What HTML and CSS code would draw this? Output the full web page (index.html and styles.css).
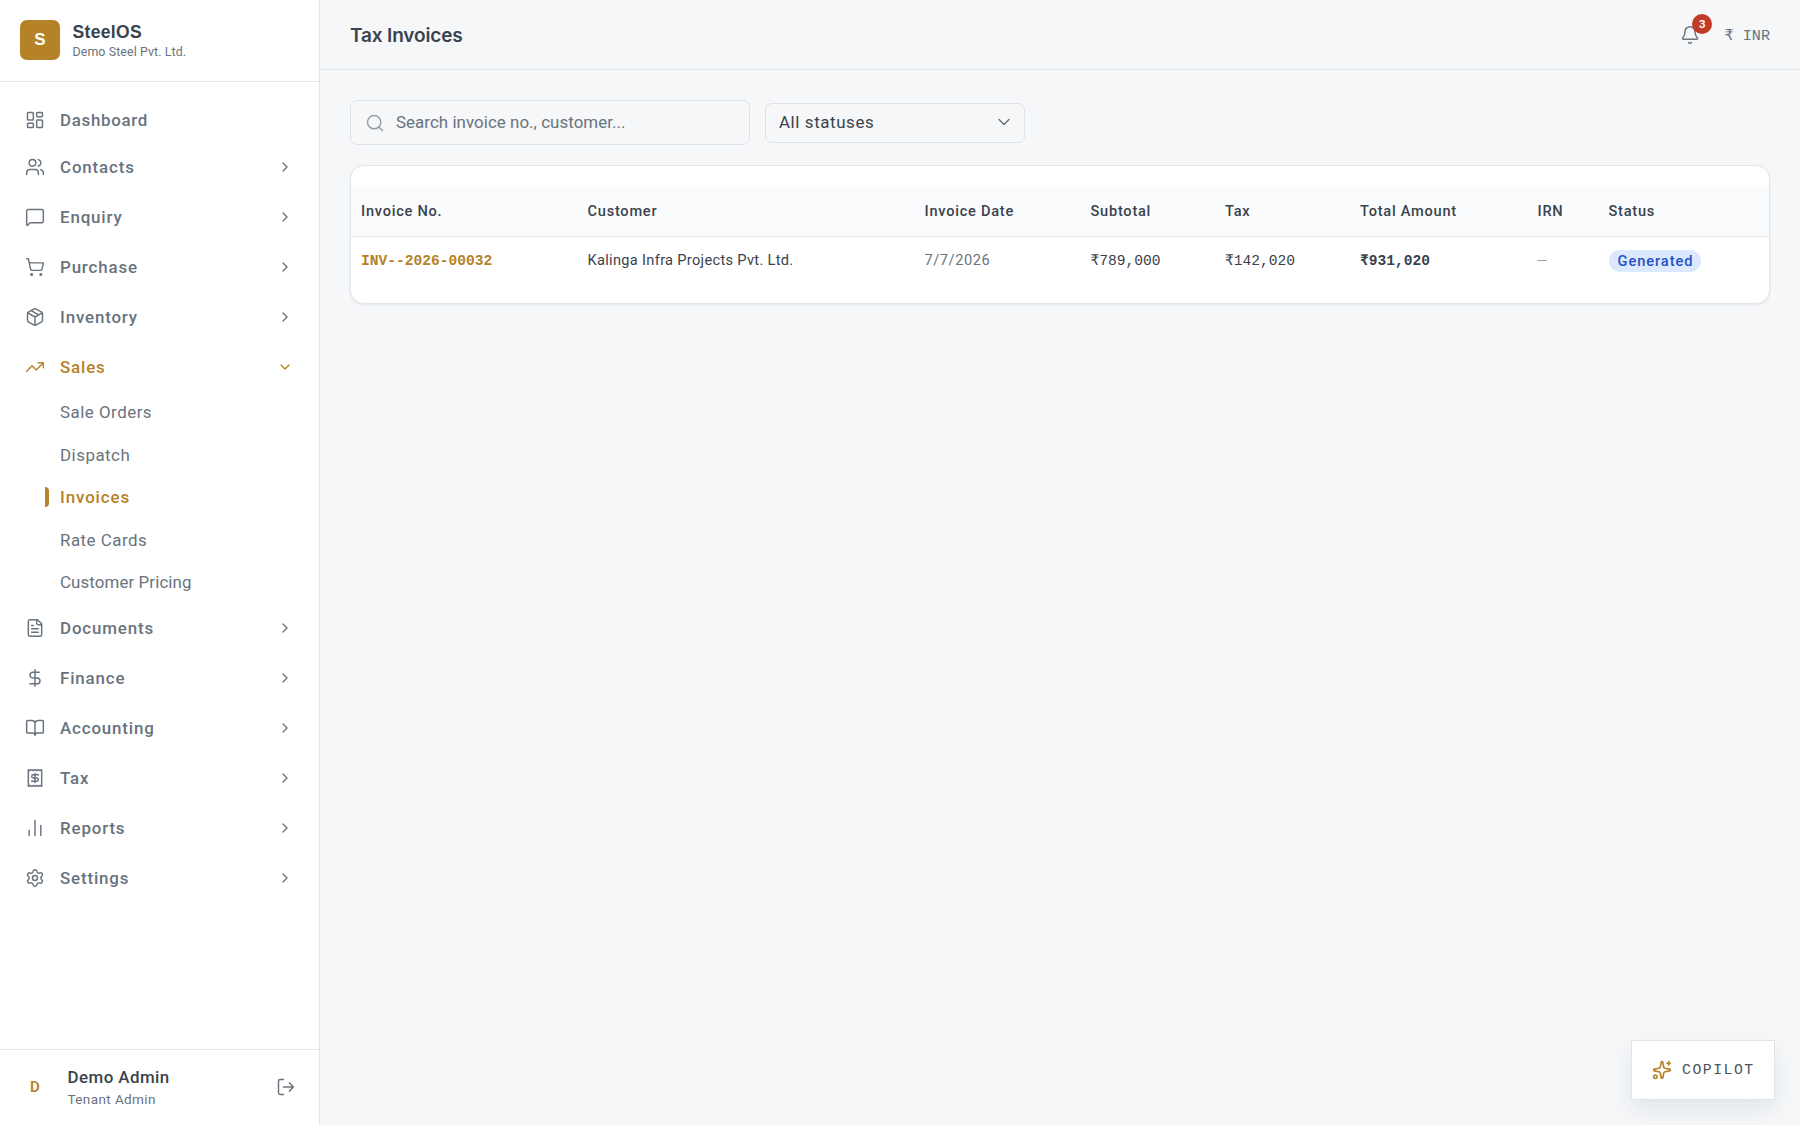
FILE: index.html
```html
<!DOCTYPE html>
<html lang="en">
<head>
  <meta charset="utf-8">
  <title>Tax Invoices - SteelOS</title>
  <link rel="stylesheet" href="styles.css">
</head>
<body>
  <aside class="sidebar">
    <div class="brand">
      <div class="brand-logo">S</div>
      <div>
        <div class="brand-name">SteelOS</div>
        <div class="brand-company">Demo Steel Pvt. Ltd.</div>
      </div>
    </div>

    <nav class="nav">
      <a class="nav-item nav-dashboard">
        <svg class="icon" viewBox="0 0 24 24"><rect x="3" y="3" width="7" height="9" rx="1"/><rect x="14" y="3" width="7" height="5" rx="1"/><rect x="14" y="12" width="7" height="9" rx="1"/><rect x="3" y="16" width="7" height="5" rx="1"/></svg>
        <span>Dashboard</span>
      </a>
      <a class="nav-item">
        <svg class="icon" viewBox="0 0 24 24"><path d="M16 21v-2a4 4 0 0 0-4-4H6a4 4 0 0 0-4 4v2"/><circle cx="9" cy="7" r="4"/><path d="M22 21v-2a4 4 0 0 0-3-3.87M16 3.13a4 4 0 0 1 0 7.75"/></svg>
        <span>Contacts</span>
        <svg class="icon chevron" viewBox="0 0 24 24"><path d="m9 18 6-6-6-6"/></svg>
      </a>
      <a class="nav-item">
        <svg class="icon" viewBox="0 0 24 24"><path d="M22 17a2 2 0 0 1-2 2H6.828a2 2 0 0 0-1.414.586l-2.202 2.202A.710.710 0 0 1 2 21.286V5a2 2 0 0 1 2-2h16a2 2 0 0 1 2 2z"/></svg>
        <span>Enquiry</span>
        <svg class="icon chevron" viewBox="0 0 24 24"><path d="m9 18 6-6-6-6"/></svg>
      </a>
      <a class="nav-item">
        <svg class="icon" viewBox="0 0 24 24"><circle cx="8" cy="21" r="1"/><circle cx="19" cy="21" r="1"/><path d="M2.05 2.05h2l2.66 12.42a2 2 0 0 0 2 1.58h9.78a2 2 0 0 0 1.95-1.57l1.65-7.43H5.12"/></svg>
        <span>Purchase</span>
        <svg class="icon chevron" viewBox="0 0 24 24"><path d="m9 18 6-6-6-6"/></svg>
      </a>
      <a class="nav-item">
        <svg class="icon" viewBox="0 0 24 24"><path d="M11 21.73a2 2 0 0 0 2 0l7-4A2 2 0 0 0 21 16V8a2 2 0 0 0-1-1.73l-7-4a2 2 0 0 0-2 0l-7 4A2 2 0 0 0 3 8v8a2 2 0 0 0 1 1.73zM12 22V12M3.29 7 12 12l8.71-5M7.5 4.27l9 5.15"/></svg>
        <span>Inventory</span>
        <svg class="icon chevron" viewBox="0 0 24 24"><path d="m9 18 6-6-6-6"/></svg>
      </a>
      <a class="nav-item active">
        <svg class="icon" viewBox="0 0 24 24"><path d="M16 7h6v6"/><path d="m22 7-8.5 8.5-5-5L2 17"/></svg>
        <span>Sales</span>
        <svg class="icon chevron" viewBox="0 0 24 24"><path d="m6 9 6 6 6-6"/></svg>
      </a>
      <div class="subnav">
        <a class="subnav-item">Sale Orders</a>
        <a class="subnav-item">Dispatch</a>
        <a class="subnav-item current">Invoices</a>
        <a class="subnav-item">Rate Cards</a>
        <a class="subnav-item last">Customer Pricing</a>
      </div>
      <a class="nav-item">
        <svg class="icon" viewBox="0 0 24 24"><path d="M15 2H6a2 2 0 0 0-2 2v16a2 2 0 0 0 2 2h12a2 2 0 0 0 2-2V7zM14 2v4a2 2 0 0 0 2 2h4M10 9H8M16 13H8M16 17H8"/></svg>
        <span>Documents</span>
        <svg class="icon chevron" viewBox="0 0 24 24"><path d="m9 18 6-6-6-6"/></svg>
      </a>
      <a class="nav-item">
        <svg class="icon" viewBox="0 0 24 24"><path d="M12 2v20M17 5H9.500a3.500 3.500 0 0 0 0 7h5a3.500 3.500 0 0 1 0 7H6"/></svg>
        <span>Finance</span>
        <svg class="icon chevron" viewBox="0 0 24 24"><path d="m9 18 6-6-6-6"/></svg>
      </a>
      <a class="nav-item">
        <svg class="icon" viewBox="0 0 24 24"><path d="M12 7v14M3 18a1 1 0 0 1-1-1V4a1 1 0 0 1 1-1h5a4 4 0 0 1 4 4 4 4 0 0 1 4-4h5a1 1 0 0 1 1 1v13a1 1 0 0 1-1 1h-6a3 3 0 0 0-3 3 3 3 0 0 0-3-3z"/></svg>
        <span>Accounting</span>
        <svg class="icon chevron" viewBox="0 0 24 24"><path d="m9 18 6-6-6-6"/></svg>
      </a>
      <a class="nav-item">
        <svg class="icon" viewBox="0 0 24 24"><path d="M4 2v20l2-1 2 1 2-1 2 1 2-1 2 1 2-1 2 1V2l-2 1-2-1-2 1-2-1-2 1-2-1-2 1Z"/><path d="M16 8h-6a2 2 0 1 0 0 4h4a2 2 0 1 1 0 4H8M12 17.500v-11"/></svg>
        <span>Tax</span>
        <svg class="icon chevron" viewBox="0 0 24 24"><path d="m9 18 6-6-6-6"/></svg>
      </a>
      <a class="nav-item">
        <svg class="icon" viewBox="0 0 24 24"><path d="M5 21v-6M12 21V3M19 21V9"/></svg>
        <span>Reports</span>
        <svg class="icon chevron" viewBox="0 0 24 24"><path d="m9 18 6-6-6-6"/></svg>
      </a>
      <a class="nav-item">
        <svg class="icon" viewBox="0 0 24 24"><path d="M9.671 4.136a2.34 2.34 0 0 1 4.659 0 2.34 2.34 0 0 0 3.319 1.915 2.34 2.34 0 0 1 2.330 4.033 2.34 2.34 0 0 0 0 3.831 2.34 2.34 0 0 1-2.330 4.033 2.34 2.34 0 0 0-3.319 1.915 2.34 2.34 0 0 1-4.659 0 2.34 2.34 0 0 0-3.320-1.915 2.34 2.34 0 0 1-2.330-4.033 2.34 2.34 0 0 0 0-3.831A2.34 2.34 0 0 1 6.350 6.051a2.34 2.34 0 0 0 3.319-1.915"/><circle cx="12" cy="12" r="3"/></svg>
        <span>Settings</span>
        <svg class="icon chevron" viewBox="0 0 24 24"><path d="m9 18 6-6-6-6"/></svg>
      </a>
    </nav>

    <div class="user">
      <div class="avatar">D</div>
      <div class="user-info">
        <div class="user-name">Demo Admin</div>
        <div class="user-role">Tenant Admin</div>
      </div>
      <svg class="icon" viewBox="0 0 24 24"><path d="M9 21H5a2 2 0 0 1-2-2V5a2 2 0 0 1 2-2h4M16 17l5-5-5-5M21 12H9"/></svg>
    </div>
  </aside>

  <main class="main">
    <header class="topbar">
      <h1>Tax Invoices</h1>
      <div class="topbar-right">
        <div class="bell">
          <svg class="icon" viewBox="0 0 24 24"><path d="M10.268 21a2 2 0 0 0 3.464 0M3.262 15.326A1 1 0 0 0 4 17h16a1 1 0 0 0 .740-1.673C19.410 13.956 18 12.499 18 8A6 6 0 0 0 6 8c0 4.499-1.411 5.956-2.738 7.326"/></svg>
          <span class="bell-count">3</span>
        </div>
        <div class="currency">₹ INR</div>
      </div>
    </header>

    <div class="content">
      <div class="filters">
        <label class="search">
          <svg class="icon" viewBox="0 0 24 24"><circle cx="11" cy="11" r="8"/><path d="m21 21-4.300-4.300"/></svg>
          <input type="text" placeholder="Search invoice no., customer...">
        </label>
        <div class="select">
          <span>All statuses</span>
          <svg class="icon" viewBox="0 0 24 24"><path d="m6 9 6 6 6-6"/></svg>
        </div>
      </div>

      <div class="card">
        <table class="invoices">
          <colgroup>
            <col class="col-no"><col class="col-customer"><col class="col-date"><col class="col-subtotal">
            <col class="col-tax"><col class="col-total"><col class="col-irn"><col class="col-status">
          </colgroup>
          <thead>
            <tr>
              <th>Invoice No.</th>
              <th>Customer</th>
              <th>Invoice Date</th>
              <th>Subtotal</th>
              <th>Tax</th>
              <th>Total Amount</th>
              <th>IRN</th>
              <th>Status</th>
            </tr>
          </thead>
          <tbody>
            <tr>
              <td class="mono invoice-no">INV--2026-00032</td>
              <td class="customer">Kalinga Infra Projects Pvt. Ltd.</td>
              <td class="date">7/7/2026</td>
              <td class="mono">₹789,000</td>
              <td class="mono">₹142,020</td>
              <td class="mono total">₹931,020</td>
              <td class="mono empty">—</td>
              <td class="status"><span class="badge">Generated</span></td>
            </tr>
          </tbody>
        </table>
      </div>
    </div>
  </main>

  <button class="copilot">
    <svg class="icon" viewBox="0 0 24 24"><path d="M11.017 2.814a1 1 0 0 1 1.966 0l1.051 5.558a2 2 0 0 0 1.594 1.594l5.558 1.051a1 1 0 0 1 0 1.966l-5.558 1.051a2 2 0 0 0-1.594 1.594l-1.051 5.558a1 1 0 0 1-1.966 0l-1.051-5.558a2 2 0 0 0-1.594-1.594l-5.558-1.051a1 1 0 0 1 0-1.966l5.558-1.051a2 2 0 0 0 1.594-1.594zM20 2v4M22 4h-4"/><circle cx="4" cy="20" r="2"/></svg>
    <span>COPILOT</span>
  </button>
</body>
</html>
```
FILE: styles.css
```css
* {
  box-sizing: border-box;
}

body {
  margin: 0;
  display: flex;
  height: 100vh;
  overflow: hidden;
  background-color: #f5f7f9;
  color: #3a434d;
  font-family: Roboto, sans-serif;
  font-size: 16.9px;
}

.icon {
  width: 20px;
  height: 20px;
  flex-shrink: 0;
  fill: none;
  stroke: currentColor;
  stroke-width: 1.75;
  stroke-linecap: round;
  stroke-linejoin: round;
}

/* Sidebar */
.sidebar {
  display: flex;
  flex-direction: column;
  width: 320px;
  flex-shrink: 0;
  background-color: #fff;
  border-right: 1px solid #e3e7ea;
  color: #69737e;
}

.brand {
  display: flex;
  align-items: center;
  gap: 12.5px;
  height: 82px;
  padding: 0 20px 1px;
  border-bottom: 1px solid #e3e7ea;
}

.brand-logo {
  display: flex;
  align-items: center;
  justify-content: center;
  width: 40px;
  height: 40px;
  border-radius: 7px;
  background-color: #b58228;
  color: #fff;
  font-family: "Liberation Sans", sans-serif;
  font-size: 17px;
  font-weight: bold;
}

.brand-name {
  padding-top: 1px;
  font-family: "Liberation Sans", sans-serif;
  font-size: 17.5px;
  font-weight: bold;
  line-height: 22px;
  letter-spacing: 0.35px;
  color: #3a434d;
}

.brand-company {
  font-size: 12.4px;
  line-height: 18px;
  letter-spacing: 0.1px;
}

.nav {
  flex: 1;
  padding-top: 15px;
}

.nav-item {
  display: flex;
  align-items: center;
  gap: 15px;
  height: 50px;
  padding: 0 26px 0 25px;
  font-weight: 500;
  letter-spacing: 0.85px;
}

.nav-dashboard {
  height: 45px;
  letter-spacing: 0.7px;
}

.nav-item .chevron {
  width: 16px;
  height: 16px;
  margin-left: auto;
  stroke-width: 2;
}

.active,
.current {
  color: #b58228;
}

.subnav {
  margin: -1px 0;
  padding-left: 45px;
}

.subnav-item {
  display: flex;
  align-items: center;
  height: 42.5px;
  padding-left: 15px;
  letter-spacing: 0.5px;
}

.subnav-item.last {
  letter-spacing: 0.1px;
}

.subnav-item.current {
  gap: 11px;
  padding-left: 0;
  font-weight: 500;
  letter-spacing: 0.9px;
}

.current::before {
  content: "";
  width: 4px;
  height: 20px;
  border-radius: 0 4px 4px 0;
  background-color: #b58228;
}

.user {
  display: flex;
  align-items: center;
  height: 76px;
  padding: 0 23px 1px 20px;
  border-top: 1px solid #e3e7ea;
}

.avatar {
  width: 30px;
  text-align: center;
  color: #b58228;
  font-size: 15px;
  font-weight: 600;
}

.user-info {
  flex: 1;
  padding-left: 17.5px;
}

.user-name {
  font-weight: 500;
  line-height: 24px;
  letter-spacing: 0.45px;
  color: #3a434d;
}

.user-role {
  font-size: 13.5px;
  line-height: 20px;
  letter-spacing: 0.4px;
}

/* Main area */
.main {
  flex: 1;
}

.topbar {
  display: flex;
  align-items: center;
  justify-content: space-between;
  height: 70px;
  padding: 0 30px;
  border-bottom: 1px solid #e3e7ea;
}

h1 {
  margin: 0;
  padding-top: 1px;
  font-family: Inter, sans-serif;
  font-size: 19px;
  font-weight: 600;
  letter-spacing: -0.15px;
}

.topbar-right {
  display: flex;
  align-items: center;
  gap: 24px;
  color: #69737e;
}

.bell {
  position: relative;
  height: 20px;
}

.bell-count {
  position: absolute;
  top: -11px;
  right: -12px;
  width: 20px;
  height: 20px;
  border-radius: 50%;
  background-color: #c23b28;
  color: #fff;
  font-size: 11.5px;
  font-weight: 600;
  line-height: 20px;
  text-align: center;
}

.currency,
.mono {
  font-family: "Liberation Mono", monospace;
  font-size: 14.6px;
}

.currency {
  padding-top: 2px;
  font-size: 15.2px;
}

.content {
  padding: 30px;
}

.filters {
  display: flex;
  align-items: center;
  gap: 15px;
}

.search {
  display: flex;
  align-items: center;
  gap: 11px;
  width: 400px;
  height: 45px;
  padding: 0 14px;
  border: 1px solid #dfe3e7;
  border-radius: 7px;
  color: #969ea6;
}

.search input {
  flex: 1;
  padding: 0 0 1px;
  border: 0;
  outline: 0;
  background: none;
  font: inherit;
  letter-spacing: 0.05px;
}

.search input::placeholder {
  color: #69737e;
}

.select {
  display: flex;
  align-items: center;
  justify-content: space-between;
  width: 260px;
  height: 40px;
  padding: 0 10px 1px 13px;
  border: 1px solid #dfe3e7;
  border-radius: 7px;
  letter-spacing: 0.6px;
}

.select .icon {
  color: #69737e;
}

.card {
  margin-top: 20px;
  padding: 20px 0;
  border: 1px solid #e3e7ea;
  border-radius: 14px;
  background-color: #fff;
  box-shadow: 0 1px 3px rgba(30, 40, 50, 0.08);
}

.invoices {
  width: 100%;
  table-layout: fixed;
  border-collapse: collapse;
  font-size: 14.6px;
  text-align: left;
}

.col-no { width: 226.5px; }
.col-customer { width: 337px; }
.col-date { width: 166px; }
.col-subtotal { width: 134.5px; }
.col-tax { width: 135px; }
.col-total { width: 177.5px; }
.col-irn { width: 71px; }

.invoices th {
  height: 50.5px;
  padding: 0 10px;
  border-bottom: 1px solid #e3e7ea;
  background-color: #fafbfc;
  font-weight: 500;
  letter-spacing: 0.75px;
}

.invoices td {
  height: 46px;
  padding: 0 10px;
}

.invoices .invoice-no {
  padding-top: 3px;
  color: #b58228;
  font-weight: bold;
}

.customer {
  letter-spacing: 0.32px;
}

.date {
  color: #69737e;
  letter-spacing: 0.55px;
}

.total {
  font-weight: bold;
}

.empty {
  color: #969ea6;
}

.invoices .status {
  padding-top: 2px;
}

.badge {
  display: inline-block;
  height: 22px;
  padding: 0 8px 0 9px;
  border-radius: 11px;
  background-color: #dbe8fd;
  color: #2450c4;
  font-weight: 500;
  line-height: 22px;
  letter-spacing: 0.95px;
}

/* Floating assistant button */
.copilot {
  position: absolute;
  right: 25px;
  bottom: 25px;
  display: flex;
  align-items: center;
  gap: 10px;
  width: 144px;
  height: 60px;
  padding: 0 20px;
  border: 1px solid #dfe5e9;
  background-color: #fff;
  box-shadow: 0 10px 22px rgba(30, 40, 50, 0.08);
  color: #4b545e;
  font-family: "Liberation Mono", monospace;
  font-size: 14.8px;
  letter-spacing: 1.5px;
}

.copilot .icon {
  color: #b58228;
  stroke-width: 2;
}
```
